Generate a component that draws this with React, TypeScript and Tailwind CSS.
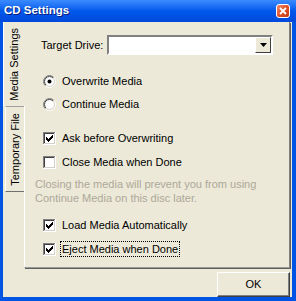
import React from 'react';

const checkCols = [
  [3, 5], [4, 6], [5, 7], [6, 6], [7, 5], [8, 4], [9, 3],
];

function CheckBox({ checked }: { checked?: boolean }) {
  return (
    <svg width="13" height="13" viewBox="0 0 13 13" className="shrink-0" shapeRendering="crispEdges">
      <rect x="0" y="0" width="13" height="13" fill="#ffffff" />
      <rect x="0" y="0" width="12" height="1" fill="#808080" />
      <rect x="0" y="0" width="1" height="12" fill="#808080" />
      <rect x="1" y="1" width="10" height="1" fill="#404040" />
      <rect x="1" y="1" width="1" height="10" fill="#404040" />
      <rect x="1" y="11" width="11" height="1" fill="#d4d0c8" />
      <rect x="11" y="1" width="1" height="11" fill="#d4d0c8" />
      {checked && checkCols.map(([x, y]) => <rect key={x} x={x} y={y} width="1" height="3" fill="#000" />)}
    </svg>
  );
}

function Radio({ checked }: { checked?: boolean }) {
  return (
    <svg width="13" height="13" viewBox="0 0 13 13" className="shrink-0">
      <defs>
        <linearGradient id="ro" x1="0" y1="0" x2="1" y2="1">
          <stop offset="0.45" stopColor="#808080" />
          <stop offset="0.55" stopColor="#ffffff" />
        </linearGradient>
        <linearGradient id="ri" x1="0" y1="0" x2="1" y2="1">
          <stop offset="0.45" stopColor="#404040" />
          <stop offset="0.55" stopColor="#d4d0c8" />
        </linearGradient>
      </defs>
      <circle cx="6.5" cy="6.5" r="6" fill="none" stroke="url(#ro)" strokeWidth="1" />
      <circle cx="6.5" cy="6.5" r="5" fill="#ffffff" stroke="url(#ri)" strokeWidth="1" />
      {checked && <circle cx="6.5" cy="6.5" r="2" fill="#000" />}
    </svg>
  );
}

function Option({ kind, checked, label, focus }: { kind: 'radio' | 'check'; checked?: boolean; label: string; focus?: boolean }) {
  return (
    <div className="h-[16px] flex items-center gap-[4px] pl-[18px]">
      {kind === 'radio' ? <Radio checked={checked} /> : <CheckBox checked={checked} />}
      <span className={focus ? 'border border-dotted border-black px-[1px] leading-[14px]' : 'px-[2px]'}>{label}</span>
    </div>
  );
}

export default function App() {
  return (
    <div className="w-[296px] h-[301px] flex flex-col bg-[#0054e3] font-['Liberation_Sans',Arial,sans-serif] text-[11px] text-black select-none">
      <div className="h-[22px] shrink-0 flex items-center justify-between pl-[4px] pr-[6px] bg-gradient-to-b from-[#3b8cff] via-[#0058ea] to-[#0049dc]">
        <span className="text-white font-bold text-[11.5px] [text-shadow:1px_1px_0_#0a1e7a]">CD Settings</span>
        <div className="w-[14px] h-[14px] rounded-[3px] border border-white bg-gradient-to-br from-[#f08a6a] via-[#e0502a] to-[#c23a14] flex items-center justify-center">
          <svg width="8" height="8" viewBox="0 0 8 8">
            <path d="M1 1 L7 7 M7 1 L1 7" stroke="#fff" strokeWidth="1.8" />
          </svg>
        </div>
      </div>
      <div className="flex-1 flex flex-col bg-[#ece9d8] ml-[3px] mr-[4px] mb-[4px]">
        <div className="h-[246px] flex">
          <div className="w-[21px] flex flex-col shrink-0">
            <div className="h-[84px] border-l border-white bg-[#ece9d8] relative z-10 -mr-px flex items-center justify-center">
              <span className="[writing-mode:vertical-rl] rotate-180 whitespace-nowrap">Media Settings</span>
            </div>
            <div className="h-[86px] ml-[2px] border-l border-white border-t border-t-[#a0a0a0] border-b border-b-[#707070] flex items-center justify-center">
              <span className="[writing-mode:vertical-rl] rotate-180 whitespace-nowrap">Temporary File</span>
            </div>
          </div>
          <div className="w-[266px] border-l border-white border-r border-r-[#808080] border-b border-b-[#9a9a9a] shadow-[1px_1px_0_#606060] flex flex-col">
            <div className="mt-[13px] h-[20px] flex items-center pl-[16px]">
              <span className="w-[66px]">Target Drive:</span>
              <div className="w-[166px] h-[20px] border-2 border-t-[#808080] border-l-[#808080] border-b-white border-r-white bg-white flex justify-end">
                <div className="w-[16px] h-[16px] bg-[#ece9d8] border border-t-white border-l-white border-b-[#404040] border-r-[#404040] flex items-center justify-center">
                  <svg width="7" height="4" viewBox="0 0 7 4"><path d="M0 0 H7 L3.5 4 Z" fill="#000" /></svg>
                </div>
              </div>
            </div>
            <div className="mt-[18px]"><Option kind="radio" checked label="Overwrite Media" /></div>
            <div className="mt-[7px]"><Option kind="radio" label="Continue Media" /></div>
            <div className="mt-[18px]"><Option kind="check" checked label="Ask before Overwriting" /></div>
            <div className="mt-[8px]"><Option kind="check" label="Close Media when Done" /></div>
            <div className="mt-[7px] pl-[10px] leading-[14px] text-[#aca899]">
              Closing the media will prevent you from using<br />Continue Media on this disc later.
            </div>
            <div className="mt-[12px]"><Option kind="check" checked label="Load Media Automatically" /></div>
            <div className="mt-[8px]"><Option kind="check" checked focus label="Eject Media when Done" /></div>
          </div>
        </div>
        <div className="flex-1 flex justify-end items-end pr-[2px]">
          <div className="w-[73px] h-[25px] bg-[#ece9d8] border border-t-white border-l-white border-b-[#404040] border-r-[#404040] shadow-[inset_-1px_-1px_0_#808080] flex items-center justify-center">
            OK
          </div>
        </div>
      </div>
    </div>
  );
}
